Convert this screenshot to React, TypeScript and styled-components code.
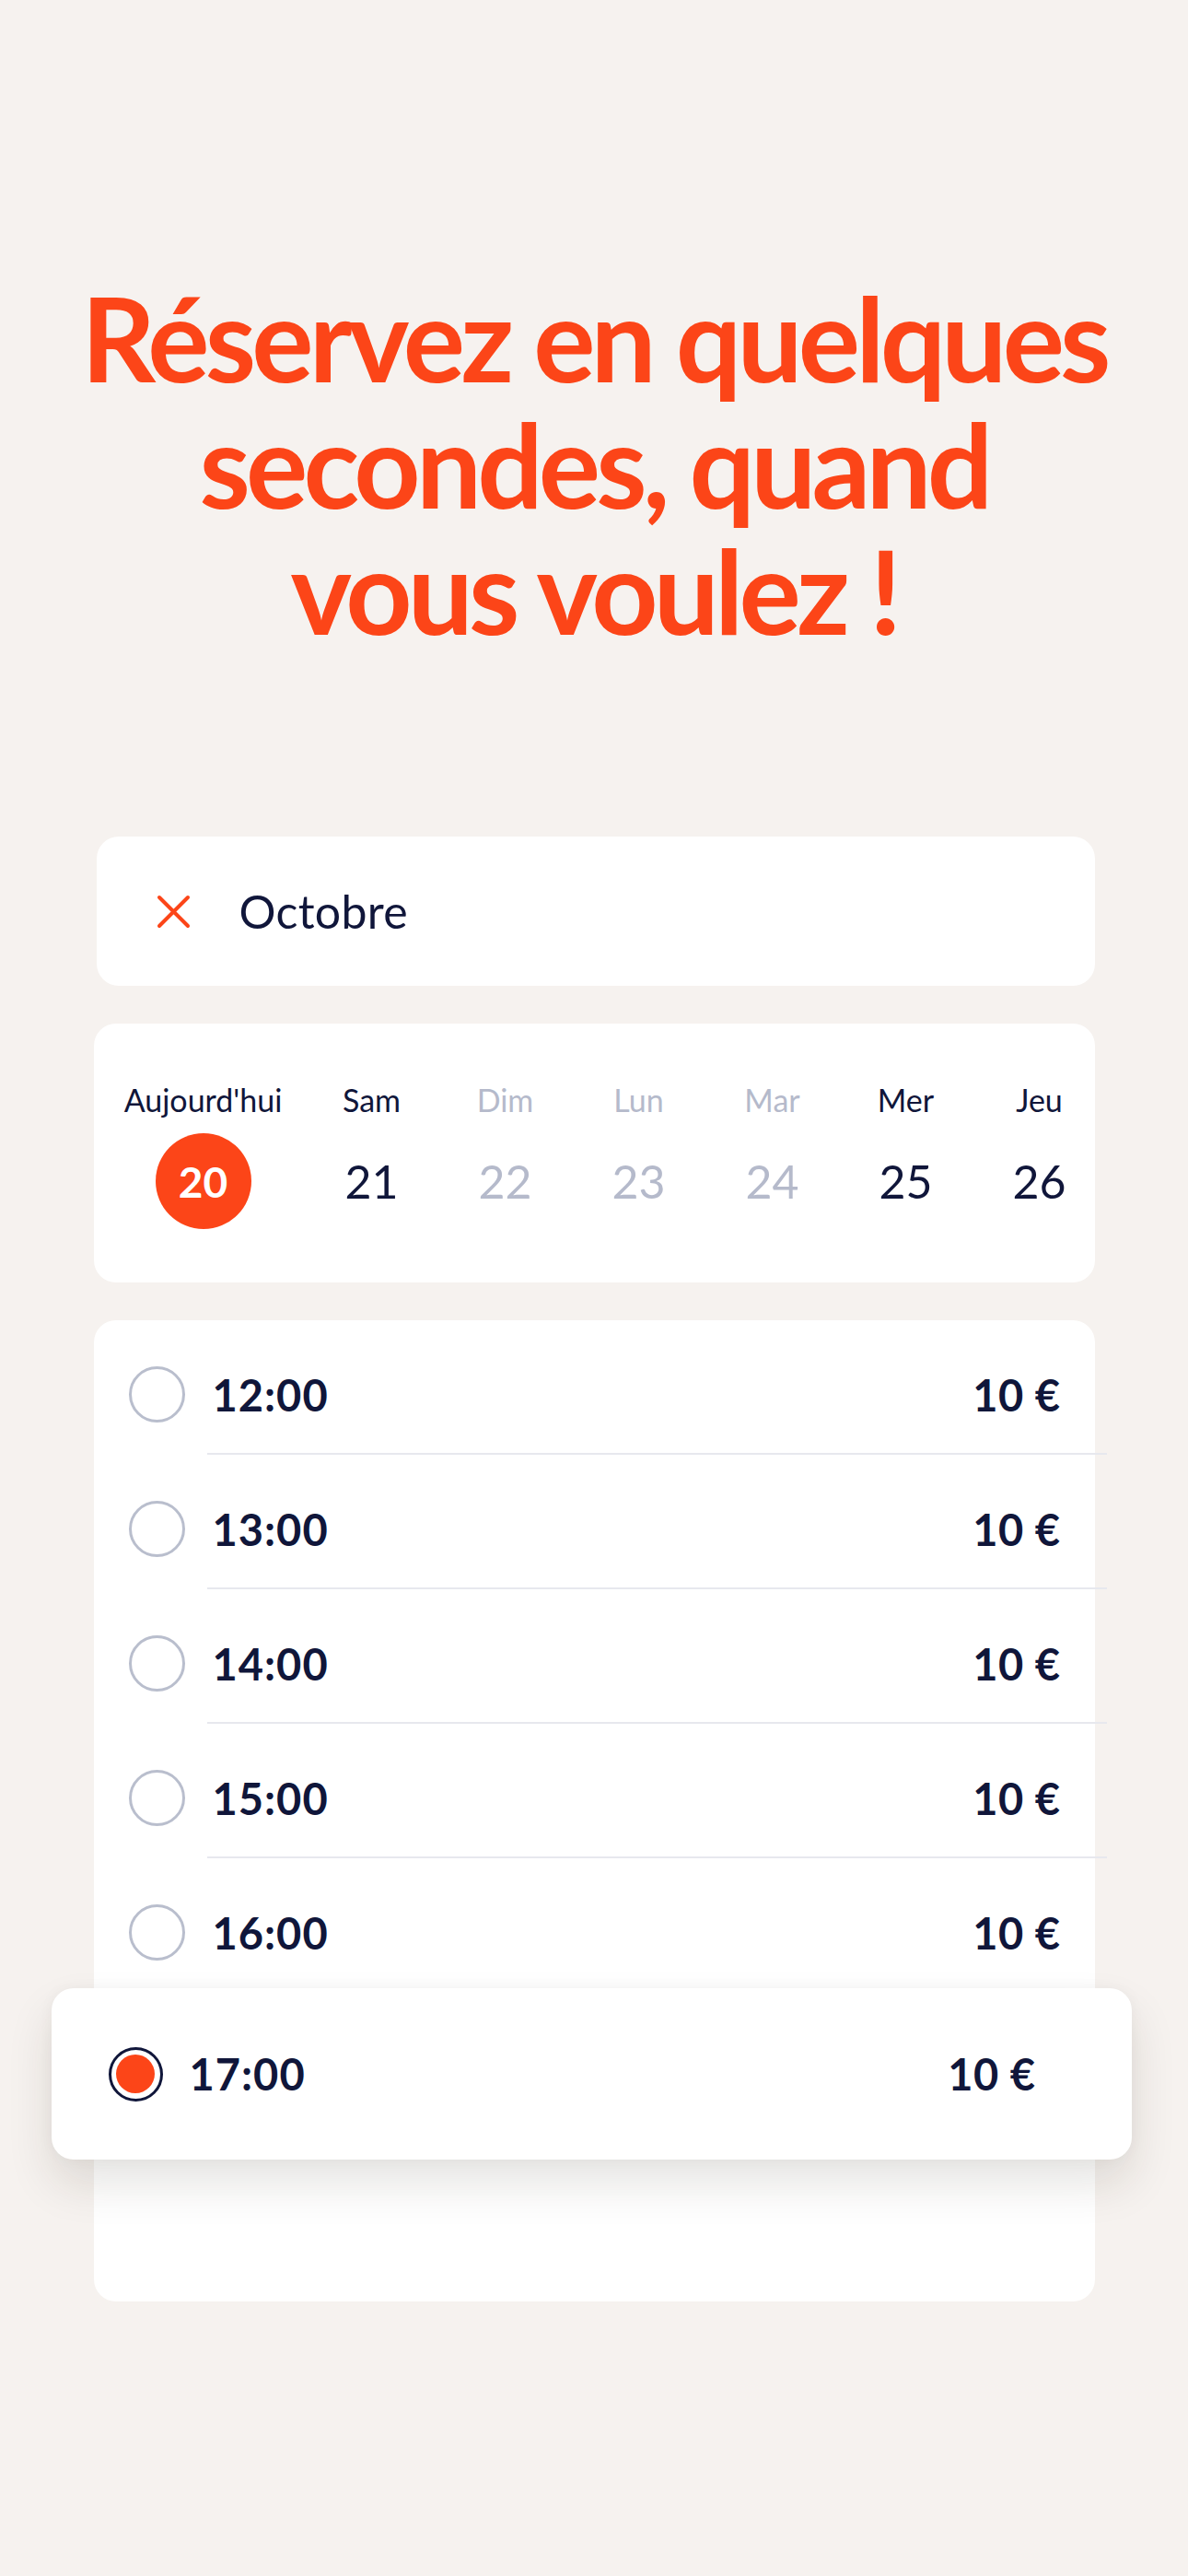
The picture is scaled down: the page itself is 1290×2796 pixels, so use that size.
import React from "react";
import styled, { createGlobalStyle } from "styled-components";

const GlobalStyle = createGlobalStyle`
  html, body {
    margin: 0;
    padding: 0;
    background: #f6f2ef;
  }
  body {
    font-family: "Lato", "Noto Sans", sans-serif;
    -webkit-font-smoothing: antialiased;
  }
`;

const ORANGE = "#fc4518";
const NAVY = "#10163a";
const MUTED = "#b5bacb";

const Page = styled.main`
  width: 1290px;
  min-height: 2796px;
  box-sizing: border-box;
  padding: 298px 0 0;
  display: flex;
  flex-direction: column;
  align-items: center;
  background: #f6f2ef;
`;

const Headline = styled.h1`
  margin: 0;
  font-family: "Lato", sans-serif;
  font-weight: 700;
  font-size: 126px;
  line-height: 137px;
  letter-spacing: -4.8px;
  color: ${ORANGE};
  text-align: center;
  white-space: nowrap;
`;

const Stack = styled.section`
  width: 1087px;
  margin-top: 199px;
  display: flex;
  flex-direction: column;
  gap: 41px;
`;

const Card = styled.div`
  background: #ffffff;
  border-radius: 24px;
`;

const MonthCard = styled(Card)`
  height: 162px;
  display: flex;
  align-items: center;
  gap: 53px;
  padding-left: 65px;
  margin-left: 3px;
`;

const MonthLabel = styled.span`
  font-size: 50px;
  font-weight: 400;
  color: ${NAVY};
  letter-spacing: 0.3px;
`;

const DaysCard = styled(Card)`
  display: flex;
  gap: 35px;
  padding: 63px 0 58px 26px;
`;

const DayCol = styled.div<{ $wide?: boolean }>`
  width: ${(p) => (p.$wide ? 186 : 110)}px;
  display: flex;
  flex-direction: column;
  align-items: center;
  gap: 16px;
  color: ${NAVY};
`;

const DayName = styled.span<{ $muted?: boolean }>`
  font-size: 34px;
  line-height: 40px;
  font-weight: 400;
  white-space: nowrap;
  color: ${(p) => (p.$muted ? MUTED : NAVY)};
`;

const DayNumber = styled.span<{ $muted?: boolean; $active?: boolean }>`
  width: 104px;
  height: 104px;
  border-radius: 50%;
  display: flex;
  align-items: center;
  justify-content: center;
  font-size: ${(p) => (p.$active ? 46 : 50)}px;
  font-weight: ${(p) => (p.$active ? 700 : 400)};
  background: ${(p) => (p.$active ? ORANGE : "transparent")};
  color: ${(p) => (p.$active ? "#ffffff" : p.$muted ? MUTED : NAVY)};
`;

const SlotsCard = styled(Card)`
  display: flex;
  flex-direction: column;
  padding-bottom: 154px;
`;

const SlotRow = styled.div`
  display: flex;
  flex-direction: column;
  padding: 50px 0 0 38px;
`;

const SlotMain = styled.div`
  height: 61px;
  display: flex;
  align-items: center;
  gap: 30px;
  padding-right: 37px;
  margin-bottom: 33px;
`;

const Divider = styled.div`
  height: 2px;
  background: #e7e8ee;
  margin: 0 -13px 0 85px;
`;

const Radio = styled.span<{ $checked?: boolean }>`
  flex: none;
  box-sizing: border-box;
  width: ${(p) => (p.$checked ? 59 : 61)}px;
  height: ${(p) => (p.$checked ? 59 : 61)}px;
  border-radius: 50%;
  border: 3px solid ${(p) => (p.$checked ? NAVY : "#b9becd")};
  display: flex;
  align-items: center;
  justify-content: center;
  &::after {
    content: "";
    width: 42px;
    height: 42px;
    border-radius: 50%;
    background: ${(p) => (p.$checked ? ORANGE : "transparent")};
  }
`;

const Time = styled.span`
  font-size: 47px;
  font-weight: 700;
  letter-spacing: 1px;
  color: ${NAVY};
`;

const Price = styled.span`
  margin-left: auto;
  font-size: 47px;
  font-weight: 700;
  letter-spacing: 0.5px;
  color: ${NAVY};
`;

const SelectedSlot = styled.div`
  position: relative;
  z-index: 1;
  height: 186px;
  margin: -5px -40px 0 -46px;
  padding: 0 104px 0 62px;
  background: #ffffff;
  border-radius: 24px;
  display: flex;
  align-items: center;
  gap: 29px;
  box-shadow: 0 26px 50px rgba(40, 30, 20, 0.12), 0 0 16px rgba(40, 30, 20, 0.04);
`;

const CloseIcon = () => (
  <svg width="37" height="37" viewBox="0 0 37 37" fill="none">
    <path d="M3 3 L34 34 M34 3 L3 34" stroke={ORANGE} strokeWidth="4" strokeLinecap="round" />
  </svg>
);

const days = [
  { name: "Aujourd'hui", num: "20", active: true, wide: true },
  { name: "Sam", num: "21" },
  { name: "Dim", num: "22", muted: true },
  { name: "Lun", num: "23", muted: true },
  { name: "Mar", num: "24", muted: true },
  { name: "Mer", num: "25" },
  { name: "Jeu", num: "26" },
];

const slots = ["12:00", "13:00", "14:00", "15:00", "16:00"];

export default function App() {
  return (
    <>
      <GlobalStyle />
      <Page>
        <Headline>
          Réservez en quelques
          <br />
          secondes, quand
          <br />
          vous voulez !
        </Headline>

        <Stack>
          <MonthCard>
            <CloseIcon />
            <MonthLabel>Octobre</MonthLabel>
          </MonthCard>

          <DaysCard>
            {days.map((d) => (
              <DayCol key={d.num} $wide={d.wide}>
                <DayName $muted={d.muted}>{d.name}</DayName>
                <DayNumber $muted={d.muted} $active={d.active}>
                  {d.num}
                </DayNumber>
              </DayCol>
            ))}
          </DaysCard>

          <SlotsCard>
            {slots.map((t) => (
              <SlotRow key={t}>
                <SlotMain>
                  <Radio />
                  <Time>{t}</Time>
                  <Price>10 €</Price>
                </SlotMain>
                <Divider />
              </SlotRow>
            ))}
            <SelectedSlot>
              <Radio $checked />
              <Time>17:00</Time>
              <Price>10 €</Price>
            </SelectedSlot>
          </SlotsCard>
        </Stack>
      </Page>
    </>
  );
}
